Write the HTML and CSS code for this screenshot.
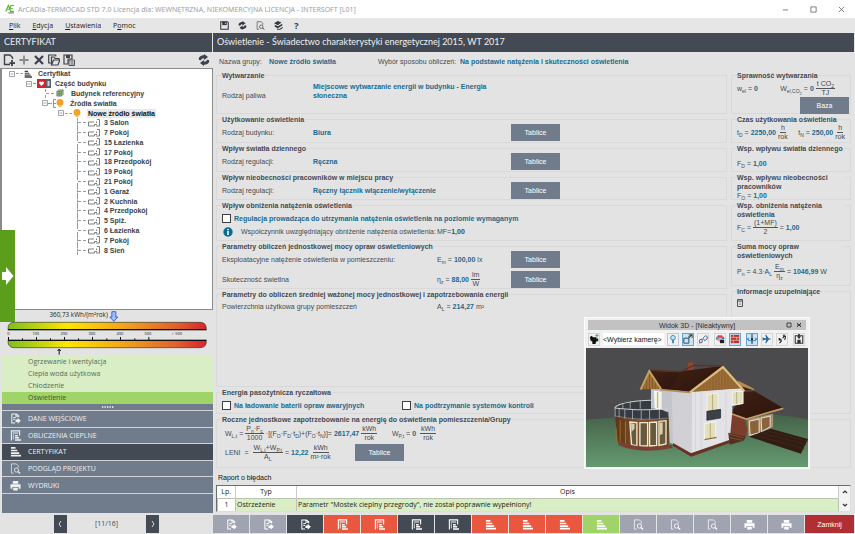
FILE: index.html
```html
<!DOCTYPE html>
<html lang="pl">
<head>
<meta charset="utf-8">
<title>ArCADia-TERMOCAD</title>
<link rel="stylesheet" href="styles.css">
</head>
<body>
<svg class="defs" aria-hidden="true">
  <defs>
    <symbol id="i-docin" viewBox="0 0 12 12"><path d="M9.500 4.500V3L7 1H2v10h3.500M6.500 1v2.500h3" fill="none" stroke="currentColor" stroke-width="1.100"/><path d="M3.500 5h3M3.500 7h2" stroke="currentColor"/><path d="M6 7.200h2.300V5.200l3.500 3.300-3.500 3.300V9.700H6z" fill="currentColor"/></symbol>
    <symbol id="i-calc" viewBox="0 0 12 12"><path d="M1.500 11.500V1h9v5M3 3.300h6M3 5.500h1.300M3 7.500h1.300M3 9.500h1.300" fill="none" stroke="currentColor" stroke-width="1.200"/><path d="M5.500 5.500h3V7h-3zM5.500 7.700h4.500v1.500H5.500zM5.500 10H12v1.700H5.500z" fill="currentColor"/></symbol>
    <symbol id="i-cert" viewBox="0 0 12 12"><path d="M1 1h5v2H1zM1 4h7v1.800H1zM1 6.800h9v1.800H1zM1 9.500h11v2H1z" fill="currentColor"/></symbol>
    <symbol id="i-find" viewBox="0 0 12 12"><path d="M4 11H1.500V1H7l2 2v2" fill="none" stroke="currentColor" stroke-width=".8"/><circle cx="7" cy="7.700" r="2.300" fill="none" stroke="currentColor" stroke-width=".9"/><path d="M8.800 9.300l2.200 2.200" stroke="currentColor" stroke-width="1.300"/></symbol>
    <symbol id="i-print" viewBox="0 0 12 12"><path d="M3 1h6v3H3zM0.500 4.500h11v5H9.500v-2h-7v2h-2zM3.500 8.500h5v3h-5z" fill="currentColor"/></symbol>
    <symbol id="i-add" viewBox="0 0 12 12"><path d="M9.500 5V3.500L7 1H1.500v9.500H7" fill="none" stroke="currentColor" stroke-width="1.400"/><path d="M9 6v6M6.500 9.200h5.500" stroke="currentColor" stroke-width="1.800"/></symbol>
    <symbol id="i-plus" viewBox="0 0 12 12"><path d="M6 1.500v9M1.500 6h9" stroke="currentColor" stroke-width="1.800"/></symbol>
    <symbol id="i-x" viewBox="0 0 12 12"><path d="M2 2l8 8M10 2l-8 8" stroke="currentColor" stroke-width="2.200"/></symbol>
    <symbol id="i-copy" viewBox="0 0 12 12"><path d="M3 9H.700V1h7v1.500M3.500 11V3H6l1 1.500h4V6M3.500 11l2-5h6.300l-1.800 5z" fill="none" stroke="currentColor" stroke-width="1.200"/></symbol>
    <symbol id="i-saveas" viewBox="0 0 12 12"><path d="M1 1h8v4H5v5H1z" fill="none" stroke="currentColor" stroke-width="1.200"/><path d="M3 1h4v3H3z" fill="currentColor"/><path d="M6 6h5.500v5.500H6zM7.500 8h3M7.500 10h3" fill="none" stroke="currentColor" stroke-width=".9"/></symbol>
    <symbol id="i-sync" viewBox="0 0 12 12"><path d="M1 6C0 3 3 1.300 6 1.300V0l4 3-4 3V4.300C4 4.300 3 5 3.300 6.300zM11 6c1 3-2 4.700-5 4.700V12L2 9l4-3v1.700c2 0 3-.7 2.700-2z" fill="currentColor"/></symbol>
    <symbol id="i-disk" viewBox="0 0 12 12"><path d="M1 1h9l1 1v9H1z" fill="none" stroke="currentColor" stroke-width="1.400"/><path d="M3 1h6v4.500H3z" fill="currentColor"/><path d="M6.500 2h1v2h-1z" fill="#e4e4e4"/></symbol>
    <symbol id="i-globe" viewBox="0 0 12 12"><path d="M0 3L5 0l5 2-5 3.500z" fill="currentColor"/><path d="M1 5l4 2 6-3.500V6l-6 3.500L1 7.500zM4 10l3 .5L12 7.500c0 3-5 5-8 4z" fill="currentColor"/></symbol>
    <symbol id="i-room" viewBox="0 0 12 8"><path d="M6 3H.500v4h6V5.500H9M9 .500h2.500v6.500H8M8.500 4V2.500" fill="none" stroke="#6b7075" stroke-width=".9"/></symbol>
    <symbol id="i-minus" viewBox="0 0 6 6"><path d="M.500.500h5v5h-5zM1.500 3h3" fill="none" stroke="#8b8f93" stroke-width=".8"/></symbol>
    <symbol id="i-bulb" viewBox="0 0 9 9"><circle cx="4.500" cy="4" r="3.900" fill="#f5a02a"/><path d="M3 7h3v2H3z" fill="#f7b95c"/></symbol>
  </defs>
</svg>

<div class="app">
  <header class="titlebar">
    <svg class="logo" viewBox="0 0 27 27"><path d="M2 20L9 4l4 9M5 14h7M24 4h-8l-3 9h9M13 13l2 7h9" fill="none" stroke="#58b531" stroke-width="3"/><path d="M9 24h15" stroke="#333" stroke-width="2"/></svg>
    <span class="title">ArCADia-TERMOCAD STD 7.0 Licencja dla: WEWNĘTRZNA, NIEKOMERCYJNA LICENCJA - INTERSOFT [L01]</span>
    <div class="winctl">
      <button aria-label="Minimalizuj"><svg viewBox="0 0 8 8"><path d="M1 4.500h6" stroke="#333" stroke-width=".7"/></svg></button>
      <button aria-label="Maksymalizuj"><svg viewBox="0 0 8 8"><path d="M1 1h6v6H1z" fill="none" stroke="#333" stroke-width=".7"/></svg></button>
      <button aria-label="Zamknij okno"><svg viewBox="0 0 8 8"><path d="M1 1l6 6M7 1L1 7" stroke="#333" stroke-width=".7"/></svg></button>
    </div>
  </header>

  <nav class="menubar">
    <div class="menus"><button><u>P</u>lik</button><button><u>E</u>dycja</button><button><u>U</u>stawienia</button><button>P<u>o</u>moc</button></div>
    <div class="quick">
      <button aria-label="Zapisz"><svg><use href="#i-disk"/></svg></button>
      <button aria-label="Odśwież"><svg><use href="#i-sync"/></svg></button>
      <button aria-label="Podgląd"><svg><use href="#i-find"/></svg></button>
      <button aria-label="Szkolenia"><svg><use href="#i-globe"/></svg></button>
      <button class="help" aria-label="Pomoc">?</button>
    </div>
  </nav>

  <div class="body">
    <aside class="side">
      <h2 class="bar">CERTYFIKAT</h2>
      <div class="tools">
        <button aria-label="Dodaj"><svg><use href="#i-add"/></svg></button>
        <button class="dim" aria-label="Plus"><svg><use href="#i-plus"/></svg></button>
        <button aria-label="Usuń"><svg><use href="#i-x"/></svg></button>
        <button aria-label="Otwórz"><svg><use href="#i-copy"/></svg></button>
        <button aria-label="Zapisz jako"><svg><use href="#i-saveas"/></svg></button>
        <button class="end" aria-label="Synchronizuj"><svg><use href="#i-sync"/></svg></button>
      </div>
      <div class="treebox">
        <ul class="tree">
          <li class="l0"><svg class="exp"><use href="#i-minus"/></svg><i class="dash"></i><svg class="ic"><use href="#i-cert"/></svg><span>Certyfikat</span></li>
          <li class="l1"><svg class="exp"><use href="#i-minus"/></svg><i class="dash short"></i><svg class="wide" viewBox="0 0 14 9"><path d="M0 0h9v9H0z" fill="#d3232e"/><path d="M4.500 7L2 4.200C2 2 4 2 4.500 3.300 5 2 7 2 7 4.200z" fill="#fff"/><path d="M9 0h5v9H9z" fill="#586170"/><path d="M10.500 2h2v5h-2z" fill="#cfd4da"/></svg><span>Część budynku</span></li>
          <li class="l2"><i class="twig last"></i><svg class="ic" viewBox="0 0 9 9"><path d="M1 3l2-2h5v5L6 8H1z" fill="#a9d392" stroke="#4c5a4c" stroke-width=".7"/><path d="M1 3h5v5M6 3l2-2M3.500 3v5M1 5.500h5" fill="none" stroke="#4c5a4c" stroke-width=".7"/></svg><span>Budynek referencyjny</span></li>
          <li class="l3"><svg class="exp"><use href="#i-minus"/></svg><i class="dash"></i><svg class="brk" viewBox="0 0 3 9"><path d="M3 .500H.500v8H3M.500 4.500H3" fill="none" stroke="#777" stroke-width=".8"/></svg><svg class="ic"><use href="#i-bulb"/></svg><span>Źródła światła</span></li>
          <li class="l4"><svg class="exp"><use href="#i-minus"/></svg><i class="dash"></i><svg class="ic"><use href="#i-bulb"/></svg><span class="sel">Nowe źródło światła</span></li>
          <li class="leaf"><i class="twig"></i><svg class="room"><use href="#i-room"/></svg><span>3 Salon</span></li>
          <li class="leaf"><i class="twig"></i><svg class="room"><use href="#i-room"/></svg><span>7 Pokój</span></li>
          <li class="leaf"><i class="twig"></i><svg class="room"><use href="#i-room"/></svg><span>15 Łazienka</span></li>
          <li class="leaf"><i class="twig"></i><svg class="room"><use href="#i-room"/></svg><span>17 Pokój</span></li>
          <li class="leaf"><i class="twig"></i><svg class="room"><use href="#i-room"/></svg><span>18 Przedpokój</span></li>
          <li class="leaf"><i class="twig"></i><svg class="room"><use href="#i-room"/></svg><span>19 Pokój</span></li>
          <li class="leaf"><i class="twig"></i><svg class="room"><use href="#i-room"/></svg><span>21 Pokój</span></li>
          <li class="leaf"><i class="twig"></i><svg class="room"><use href="#i-room"/></svg><span>1 Garaż</span></li>
          <li class="leaf"><i class="twig"></i><svg class="room"><use href="#i-room"/></svg><span>2 Kuchnia</span></li>
          <li class="leaf"><i class="twig"></i><svg class="room"><use href="#i-room"/></svg><span>4 Przedpokój</span></li>
          <li class="leaf"><i class="twig"></i><svg class="room"><use href="#i-room"/></svg><span>5 Spiż.</span></li>
          <li class="leaf"><i class="twig"></i><svg class="room"><use href="#i-room"/></svg><span>6 Łazienka</span></li>
          <li class="leaf"><i class="twig"></i><svg class="room"><use href="#i-room"/></svg><span>7 Pokój</span></li>
          <li class="leaf"><i class="twig"></i><svg class="room"><use href="#i-room"/></svg><span>8 Sień</span></li>
        </ul>
        <button class="drawer" aria-label="Rozwiń panel"><svg viewBox="0 0 13 20"><path d="M1 6h4V1l7.500 9L5 19v-5H1z" fill="#fff"/></svg></button>
      </div>
      <svg class="gauge" viewBox="0 123 636 138">
        <defs><linearGradient id="scale"><stop offset="0" stop-color="#7fbf1f"/><stop offset=".3" stop-color="#ffe600"/><stop offset=".6" stop-color="#f0a01e"/><stop offset=".85" stop-color="#e0602e"/><stop offset="1" stop-color="#d8232f"/></linearGradient></defs>
        <text x="147" y="145" class="gval">360,73 kWh/(m²rok)</text>
        <path d="M334 128h12v16h6l-12 13-12-13h6z" fill="#9fc0ff" stroke="#2c50b8" stroke-width="2.500"/>
        <path d="M23 182V174Q25 160 42 160H598Q615 160 617 174V182z" fill="url(#scale)" stroke="#3a3a20" stroke-width="2"/>
        <path d="M22 182H618" stroke="#111" stroke-width="4"/>
        <g class="ticks"><text x="20" y="197">0</text><text x="95" y="197">100</text><text x="180" y="197">200</text><text x="264" y="197">300</text><text x="348" y="197">400</text><text x="432" y="197">500</text><text x="514" y="197">&gt; 500</text></g>
        <path d="M24 204v9M108 204v9M192 204v9M276 204v9M360 204v9M445 204v9M66 208v5M150 208v5M234 208v5M319 208v5M403 208v5" stroke="#111" stroke-width="3"/>
        <path d="M23 214V222Q25 236 42 236H598Q615 236 617 222V214z" fill="url(#scale)" stroke="#3a3a20" stroke-width="2"/>
        <path d="M22 214H618" stroke="#111" stroke-width="4"/>
        <path d="M176 257V241M171 246l5-6 5 6" fill="none" stroke="#111" stroke-width="3"/>
      </svg>
      <div class="sub"><a href="#">Ogrzewanie i wentylacja</a><a href="#">Ciepła woda użytkowa</a><a href="#">Chłodzenie</a><a href="#" class="on">Oświetlenie</a></div>
      <div class="grip"><svg viewBox="0 0 12 2"><path d="M0 1h12" stroke="#fff" stroke-width="1.300" stroke-dasharray="1.300 1.200"/></svg></div>
      <nav class="main">
        <a href="#"><svg><use href="#i-docin"/></svg>DANE WEJŚCIOWE</a>
        <a href="#"><svg><use href="#i-calc"/></svg>OBLICZENIA CIEPLNE</a>
        <a href="#" class="on"><svg><use href="#i-cert"/></svg>CERTYFIKAT</a>
        <a href="#"><svg><use href="#i-find"/></svg>PODGLĄD PROJEKTU</a>
        <a href="#"><svg><use href="#i-print"/></svg>WYDRUKI</a>
      </nav>
      <div class="filler"></div>
      <div class="pager">
        <button aria-label="Poprzedni"><svg viewBox="0 0 6 8"><path d="M4 1L2 4l2 3" fill="none" stroke="#fff" stroke-width=".8"/></svg></button>
        <span>[11/16]</span>
        <button aria-label="Następny"><svg viewBox="0 0 6 8"><path d="M2 1l2 3-2 3" fill="none" stroke="#fff" stroke-width=".8"/></svg></button>
      </div>
    </aside>

    <main class="content">
      <h1 class="bar">Oświetlenie - Świadectwo charakterystyki energetycznej 2015, WT 2017</h1>
      <div class="form">
        <div class="groupline"><span class="gname">Nazwa grupy:</span><b class="gvalue">Nowe źródło światła</b><span class="gname2">Wybór sposobu obliczeń:</span><b>Na podstawie natężenia i skuteczności oświetlenia</b></div>
        <div class="cols">
          <div class="col wide-col">
            <section class="g h39"><h3>Wytwarzanie</h3><div class="row two"><span class="lab">Rodzaj paliwa</span><b class="fuel">Miejscowe wytwarzanie energii w budynku - Energia słoneczna</b></div></section>
            <section class="g h24"><h3>Użytkowanie oświetlenia</h3><div class="row"><span class="lab">Rodzaj budynku:</span><b class="val">Biura</b><button class="btn">Tablice</button></div></section>
            <section class="g h24"><h3>Wpływ światła dziennego</h3><div class="row"><span class="lab">Rodzaj regulacji:</span><b class="val">Ręczna</b><button class="btn">Tablice</button></div></section>
            <section class="g h23"><h3>Wpływ nieobecności pracowników w miejscu pracy</h3><div class="row"><span class="lab">Rodzaj regulacji:</span><b class="val">Ręczny łącznik włączenie/wyłączenie</b><button class="btn">Tablice</button></div></section>
            <section class="g h36"><h3>Wpływ obniżenia natężenia oświetlenia</h3>
              <label class="check"><input type="checkbox"><b>Regulacja prowadząca do utrzymania natężenia oświetlenia na poziomie wymaganym</b></label>
              <div class="info"><svg viewBox="0 0 10 10"><circle cx="5" cy="5" r="4.700" fill="#0b6a94"/><path d="M4.200 2h1.600v1.300H4.200zM4.200 4h1.600v4H4.200z" fill="#fff"/></svg><span class="wsp">Współczynnik uwzględniający obniżenie natężenia oświetlenia:</span><span>MF=<strong>1,00</strong></span></div>
            </section>
            <section class="g h43"><h3>Parametry obliczeń jednostkowej mocy opraw oświetleniowych</h3>
              <div class="row"><span class="lab long">Eksploatacyjne natężenie oświetlenia w pomieszczeniu:</span><span class="f val"><span>E<sub>m</sub></span>=<b>100,00</b><span>lx</span></span><button class="btn">Tablice</button></div>
              <div class="row gap"><span class="lab long">Skuteczność świetlna</span><span class="f val"><span>η<sub>z</sub></span>=<b>88,00</b><span class="fr"><span>lm</span><span>W</span></span></span><button class="btn">Tablice</button></div>
            </section>
            <section class="g h93"><h3>Parametry do obliczeń średniej ważonej mocy jednostkowej i zapotrzebowania energii</h3>
              <div class="row area"><span class="lab long">Powierzchnia użytkowa grupy pomieszczeń</span><span class="f"><span>A<sub>L</sub></span>=<b>214,27</b><span>m²</span></span></div>
            </section>
            <section class="g h22"><h3>Energia pasożytnicza ryczałtowa</h3>
              <div class="row checks"><label class="check"><input type="checkbox"><b>Na ładowanie baterii opraw awaryjnych</b></label><label class="check"><input type="checkbox"><b>Na podtrzymanie systemów kontroli</b></label></div>
            </section>
          </div>
          <div class="col thin-col">
            <section class="g h39"><h3>Sprawność wytwarzania</h3><div class="row pair gases"><span class="f"><span>w<sub>el</sub></span>=<b>0</b></span><span class="f"><span>W<sub>el,CO<sub>2</sub></sub></span>=<b>0</b><span class="fr"><span>t CO<sub>2</sub></span><span>TJ</span></span></span></div><button class="btn base">Baza</button></section>
            <section class="g h24"><h3>Czas użytkowania oświetlenia</h3><div class="row pair"><span class="f"><span>t<sub>D</sub></span>=<b>2250,00</b><span class="fr"><span>h</span><span>rok</span></span></span><span class="f"><span>t<sub>N</sub></span>=<b>250,00</b><span class="fr"><span>h</span><span>rok</span></span></span></div></section>
            <section class="g h24"><h3>Wsp. wpływu światła dziennego</h3><div class="row low"><span class="f"><span>F<sub>D</sub></span>=<b>1,00</b></span></div></section>
            <section class="g h23"><h3>Wsp. wpływu nieobecności pracowników</h3><div class="row tight"><span class="f"><span>F<sub>O</sub></span>=<b>1,00</b></span></div></section>
            <section class="g h36"><h3>Wsp. obniżenia natężenia oświetlenia</h3><div class="row"><span class="f"><span>F<sub>C</sub></span>=<span class="fr"><span>(1+MF)</span><span>2</span></span>=<b>1,00</b></span></div></section>
            <section class="g h40"><h3>Suma mocy opraw oświetleniowych</h3><div class="row gap"><span class="f"><span>P<sub>n</sub></span>=<span>4.3·A<sub>L</sub></span><span class="fr"><span>E<sub>m</sub></span><span>η<sub>z</sub></span></span>=<b>1046,99</b><span>W</span></span></div></section>
            <section class="g grow"><h3>Informacje uzupełniające</h3><button class="note" aria-label="Informacje"><svg viewBox="0 0 6 8"><path d="M.500.500h5v7h-5zM1 2h4" fill="none" stroke="#40454c" stroke-width=".9"/><path d="M2 4h2M2 5.500h2" stroke="#80858c" stroke-width=".6"/></svg></button></section>
          </div>
        </div>
        <section class="g yearly"><h3>Roczne jednostkowe zapotrzebowanie na energię do oświetlenia pomieszczenia/Grupy</h3>
          <div class="row eq"><span class="f e1"><span>W<sub>L,t</sub></span>=<span class="fr"><span>P<sub>n</sub>·F<sub>c</sub></span><span>1000</span></span><span>·[(F<sub>O</sub>·F<sub>D</sub>·t<sub>D</sub>)+(F<sub>O</sub>·t<sub>N</sub>)]=</span><b>2617,47</b><span class="fr"><span>kWh</span><span>rok</span></span></span><span class="f"><span>W<sub>P,t</sub></span>=<b>0</b><span class="fr sp"><span>kWh</span><span>rok</span></span></span></div>
          <div class="row eq"><span class="f e2"><span>LENI</span>&nbsp;=&nbsp;<span class="fr"><span>W<sub>L,t</sub>+W<sub>P,t</sub></span><span>A<sub>L</sub></span></span>=<b>12,22</b><span class="fr"><span>kWh</span><span>m²·rok</span></span></span><button class="btn">Tablice</button></div>
        </section>

        <div class="view3d">
          <div class="vtitle"><span>Widok 3D - [Nieaktywny]</span><svg viewBox="0 0 18 6"><path d="M1 1h4v4H1zM11 1l4 4M15 1l-4 4M11 3h4" fill="none" stroke="#333" stroke-width=".9"/></svg></div>
          <div class="vtools">
            <button aria-label="Dodaj kamerę"><svg viewBox="0 0 12 12"><path d="M1 4l2-2 2 2h4v2l2-1v4l-2-1v2H8v2H4V9L2 8z" fill="#111"/><path d="M9.500 0v4M7.500 2h4" stroke="#2faa2f"/></svg></button>
            <select aria-label="Kamera"><option>&lt;Wybierz kamerę&gt;</option></select>
            <button class="hl" aria-label="Pinezka"><svg viewBox="0 0 12 12"><circle cx="6" cy="4.500" r="2.800" fill="#c5e6f8" stroke="#2b79aa"/><path d="M6 7v4" stroke="#2b79aa" stroke-width="2"/></svg></button>
            <button class="on" aria-label="Perspektywa"><svg viewBox="0 0 12 12"><path d="M1 5h6v6H1zM6 4l4-3M7 1h4v4M7 5l4-4" fill="none" stroke="#233" stroke-width="1"/></svg></button>
            <button aria-label="Aksonometria"><svg viewBox="0 0 12 12"><path d="M2 7l3-1v4l-3 1zM6 5l3-3 2 1v3L8 8z" fill="#eef" stroke="#246" stroke-width=".9"/></svg></button>
            <button class="m" aria-label="Kolory"><svg viewBox="0 0 12 12"><path d="M1 6a5 4.500 0 0 1 10 0l-4 1-1 3z" fill="#d8a0c8"/><circle cx="2.500" cy="5.500" r="1.500" fill="#3ab54a"/><circle cx="4.500" cy="3" r="1.500" fill="#b3a"/><circle cx="7.500" cy="3" r="1.500" fill="#e33"/><circle cx="9.700" cy="5" r="1.500" fill="#28c"/><path d="M6 7h5v4H6z" fill="#222"/></svg></button>
            <button class="on" aria-label="Tekstury"><svg viewBox="0 0 12 12"><path d="M1 1h10v10H1z" fill="#b5342c"/><path d="M1 4h10M1 7.500h10M4 1v3M8 4v3.500M4 7.500V11" stroke="#ecd0c5" stroke-width=".8"/></svg></button>
            <button class="on m" aria-label="Orbita"><svg viewBox="0 0 12 12"><path d="M6 0v12" stroke="#12304a" stroke-width="1.200"/><path d="M.500 6c2 3 9 3 11 0M2 4.500L.500 6l2 1.500M10 4.500L11.500 6l-2 1.500" fill="none" stroke="#235a85"/><circle cx="6" cy="6" r="1.300" fill="#102030"/></svg></button>
            <button class="sky" aria-label="Lot"><svg viewBox="0 0 12 12"><path d="M11.500 6L8 6.900 5 11H4l1-4-3 .2L1 8.500 .500 6 1 3.500l1 1.300L5 5 4 1h1l3 4.100z" fill="#246da8"/></svg></button>
            <button aria-label="Spacer"><svg viewBox="0 0 12 12"><path d="M2 7h3v2l-2 2M7 5l1-2h2v2l-1 2M7 1.500h3M2 5.500h2" fill="none" stroke="#222" stroke-width="1.300"/></svg></button>
            <button class="m" aria-label="Zapisz widok"><svg viewBox="0 0 12 12"><path d="M1.500 2h9v9h-9z" fill="none" stroke="#333" stroke-width="1.300"/><path d="M4 7h4v4H4zM5 0h2v3h1.500L6 6 3.500 3H5z" fill="#333"/></svg></button>
          </div>
          <svg class="scene" viewBox="18 108 663 357" preserveAspectRatio="none">
            <defs>
              <linearGradient id="gr" x1="0" y1="0" x2="0" y2="1"><stop offset="0" stop-color="#456149"/><stop offset="1" stop-color="#659a70"/></linearGradient>
              <linearGradient id="wd" x1="0" x2="1"><stop offset="0" stop-color="#5c3418"/><stop offset=".5" stop-color="#8a5528"/><stop offset="1" stop-color="#6a3e1c"/></linearGradient>
              <pattern id="planks" width="9" height="8" patternUnits="userSpaceOnUse"><path d="M0 0h9v8H0z" fill="#9c6e38"/><path d="M0 0v8" stroke="#7d5324" stroke-width="4"/></pattern>
              <linearGradient id="tiles" x1="0" y1="0" x2="1" y2="1"><stop offset="0" stop-color="#412013"/><stop offset="1" stop-color="#2b140d"/></linearGradient>
            </defs>
            <path d="M18 108h663v357H18z" fill="#4b4b4d"/>
            <path d="M18 323Q110 315 210 308L560 305Q630 312 681 322V465H18z" fill="url(#gr)"/>
            <path d="M322 152l16-3 3 40h-19z" fill="#8e4634"/>
            <path d="M450 208L519 228 522 234 470 236z" fill="#41200f"/>
            <path d="M470 205l52 26-4 4-40-14z" fill="#b98a52"/>
            <path d="M453 300L490 318 500 352 496 374 447 386z" fill="#7d3d2d"/>
            <path d="M500 322L577 305V345L503 373z" fill="#a98f6b"/>
            <path d="M506 328L535 321V362L508 370zM541 319L568 312V345L543 358z" fill="#8a6438" stroke="#ddd" stroke-width="3"/>
            <path d="M487 240L522 238 607 288 497 320 452 304z" fill="url(#tiles)"/>
            <path d="M452 305L497 321 607 289" fill="none" stroke="#c39a65" stroke-width="5"/>
            <path d="M505 374L570 350 681 381 660 425z" fill="#321d14"/>
            <path d="M520 369L670 410M540 362L676 398M556 356L680 388" stroke="#452a1f" stroke-width="2"/>
            <path d="M212 222L332 240V422L268 392 264 300 212 292z" fill="#c4c5cb"/>
            <path d="M274 240L332 243V425L278 394z" fill="#d0d0d5"/>
            <path d="M332 238L487 228V276L455 282V300L447 384 332 424z" fill="#e2e2e7"/>
            <path d="M345 240V415M362 240V411M436 240V388" stroke="#d6d6db" stroke-width="3"/>
            <path d="M278 393L332 424 447 384V393L332 434 278 402z" fill="#6a3125"/>
            <path d="M443 362l52 12-6 12-42 12z" fill="#54301f"/><path d="M443 366l45 11M443 376l43 9" stroke="#8b5b40" stroke-width="2"/>
            <path d="M207 178L240 232 181 232z" fill="url(#planks)"/>
            <path d="M206 176L302 181 275 236 242 232z" fill="url(#tiles)"/>
            <path d="M302 178L425 162 330 240 268 233z" fill="url(#tiles)"/>
            <path d="M208 174L302 179 340 160 428 162" fill="none" stroke="#593424" stroke-width="4"/>
            <path d="M427 169L488 228 334 240z" fill="url(#planks)"/>
            <path d="M328 241L427 165 491 238" fill="none" stroke="#ddbc7d" stroke-width="7"/>
            <path d="M181 233L207 177 244 234" fill="none" stroke="#c5a261" stroke-width="6"/>
            <path d="M240 233L328 241" stroke="#b28e5d" stroke-width="5"/>
            <path d="M223 238L242 241V290L225 288z" fill="#f2efd9" stroke="#fff" stroke-width="3"/><path d="M232 240v48" stroke="#8e8b7c" stroke-width="2"/>
            <path d="M380 248L412 244V297L380 300zM372 335L405 329V377L372 384zM455 240L487 238V274L455 278z" fill="#e3dfb9" stroke="#f3f2ea" stroke-width="3"/>
            <path d="M396 247V298M389 333V380M468 240V276" stroke="#b3ad8b" stroke-width="3"/>
            <path d="M379 298L420 292V318L379 325z" fill="#3c4145" stroke="#202224" stroke-width="2"/><path d="M372 383l36-7" stroke="#9d6b36" stroke-width="4"/>
            <path d="M105 315Q180 300 265 316V403Q180 420 113 388z" fill="url(#wd)"/>
            <path d="M149 330L170 332V402L154 398zM179 332L202 332V402L179 402zM208 331L229 330V400L208 402zM236 328L257 326V396L236 400z" fill="#67593c" stroke="#efe9d8" stroke-width="4"/>
            <path d="M152 334L163 335V350L154 360zM238 332L247 331V365L238 370z" fill="#d9cda4"/>
            <path d="M108 350v38M120 325v67M136 328v70" stroke="#a56c33" stroke-width="3"/>
            <path d="M112 387Q190 416 276 398V408Q180 428 116 400z" fill="#7a4131"/>
            <path d="M104 286Q120 268 212 265V290Q265 288 264 318Q180 328 106 312z" fill="#363b42"/>
            <path d="M104 287Q120 268 214 265M104 288Q170 297 265 291" fill="none" stroke="#c9ccd0" stroke-width="3"/>
            <path d="M265 318Q180 328 106 312" fill="none" stroke="#8d9196" stroke-width="2"/>
            <path d="M105 286v28M117 290v26M134 292v28M157 294v28M183 295v28M208 294v28M237 293v27M128 274v17M150 270v20M180 267v23" stroke="#c9ccd0" stroke-width="2"/>
          </svg>
        </div>
      </div>

      <section class="report">
        <h4>Raport o błędach</h4>
        <div class="rbox">
          <table>
            <thead><tr><th class="c1">Lp.</th><th class="c2">Typ</th><th>Opis</th></tr></thead>
            <tbody><tr><td class="n">1</td><td>Ostrzeżenie</td><td>Parametr "Mostek cieplny przegrody", nie został poprawnie wypełniony!</td></tr></tbody>
          </table>
          <div class="scroll"><svg viewBox="0 0 6 4"><path d="M1 3l2-2 2 2" fill="none" stroke="#333" stroke-width="1.200"/></svg><svg viewBox="0 0 6 4"><path d="M1 1l2 2 2-2" fill="none" stroke="#333" stroke-width="1.200"/></svg></div>
        </div>
      </section>

      <footer class="steps">
        <button class="gy" aria-label="Krok 1"><svg><use href="#i-docin"/></svg></button>
        <button class="gy" aria-label="Krok 2"><svg><use href="#i-docin"/></svg></button>
        <button class="dk" aria-label="Krok 3"><svg><use href="#i-docin"/></svg></button>
        <button class="rd" aria-label="Krok 4"><svg><use href="#i-calc"/></svg></button>
        <button class="rd" aria-label="Krok 5"><svg><use href="#i-calc"/></svg></button>
        <button class="dk" aria-label="Krok 6"><svg><use href="#i-calc"/></svg></button>
        <button class="dk" aria-label="Krok 7"><svg><use href="#i-calc"/></svg></button>
        <button class="rd" aria-label="Krok 8"><svg><use href="#i-cert"/></svg></button>
        <button class="rd" aria-label="Krok 9"><svg><use href="#i-cert"/></svg></button>
        <button class="rd" aria-label="Krok 10"><svg><use href="#i-cert"/></svg></button>
        <button class="gn" aria-label="Krok 11"><svg><use href="#i-cert"/></svg></button>
        <button class="gy" aria-label="Krok 12"><svg><use href="#i-find"/></svg></button>
        <button class="gy" aria-label="Krok 13"><svg><use href="#i-find"/></svg></button>
        <button class="gy" aria-label="Krok 14"><svg><use href="#i-find"/></svg></button>
        <button class="gy" aria-label="Krok 15"><svg><use href="#i-print"/></svg></button>
        <button class="gy" aria-label="Krok 16"><svg><use href="#i-print"/></svg></button>
        <button class="close">Zamknij</button>
      </footer>
    </main>
  </div>
</div>
</body>
</html>
```
FILE: styles.css
```css
* { box-sizing: border-box; }
body { margin: 0; background: #e3e3e3; color: #444a52; font: 7px/9px "Liberation Sans", sans-serif; }
button { border: 0; padding: 0; margin: 0; background: none; color: inherit; font: inherit; display: flex; align-items: center; justify-content: center; }
a { color: inherit; text-decoration: none; }
h1, h2, h3, h4, ul { margin: 0; padding: 0; }
ul { list-style: none; }
svg { display: block; flex: none; }
.defs { position: absolute; width: 0; height: 0; }

.app { min-height: 100vh; display: flex; flex-direction: column; }
.titlebar { height: 18px; background: #fff; display: flex; align-items: center; padding-left: 5px; color: #a0a0a0; font: 7px/9px "Noto Sans", sans-serif; }
.logo { width: 10px; height: 10px; margin-right: 3px; }
.winctl { margin-left: auto; display: flex; }
.winctl button { width: 28px; height: 18px; }
.winctl svg { width: 7px; height: 7px; }

.menubar { height: 15px; display: flex; background: #e6e6e6; color: #222; font: 7px/9px "Open Sans", sans-serif; }
.menus { width: 220px; display: flex; align-items: center; gap: 12px; padding-left: 9px; }
.quick { display: flex; align-items: center; gap: 9px; color: #333840; }
.quick svg, .quick button { width: 9px; height: 9px; }
.quick .help { font: bold 9px/9px "Open Sans", sans-serif; }

.body { flex: 1; display: flex; }
.side { width: 213px; flex: none; display: flex; flex-direction: column; }
.content { flex: 1; min-width: 0; display: flex; flex-direction: column; }
.bar { height: 19px; background: #434a54; color: #eef0f2; font: 9px/18px Lato, "Open Sans", sans-serif; padding-left: 4px; border-right: 1px solid #e3e3e3; }

.tools { height: 16px; display: flex; align-items: center; gap: 3px; padding: 0 3px; color: #3b424b; }
.tools button, .tools svg { width: 12px; height: 12px; }
.tools .dim { color: #85898e; }
.tools .end { margin-left: auto; }
.treebox { position: relative; height: 242px; background: #fff; border: 1px solid #8a8a8a; border-width: 1px 1px 1px 2px; }
.tree { height: 186px; display: grid; grid-auto-rows: 1fr; color: #3a3f46; font-weight: bold; }
.tree li { display: flex; align-items: center; }
.exp { width: 6px; height: 6px; }
.dash { width: 7px; border-top: 1px dashed #999; margin: 0 1px; }
.dash.short { width: 3px; }
.ic { width: 8px; height: 8px; margin-right: 6px; }
.wide { width: 14px; height: 9px; margin-right: 4px; }
.brk { width: 3px; height: 9px; }
.room { width: 12px; height: 8px; margin-right: 4px; }
.twig { width: 11px; align-self: stretch; border-left: 1px dashed #999; display: flex; align-items: center; }
.twig::after { content: ""; width: 8px; border-top: 1px dashed #999; }
.l0 { padding-left: 7px; }
.l1 { padding-left: 24px; }
.l2 { padding-left: 43px; }
.l2 .ic { margin-right: 7px; }
.l3 { padding-left: 40px; }
.l4 { padding-left: 56px; }
.l3 .dash { width: 4px; margin: 0 1px 0 0; }
.leaf { padding-left: 75px; }
.sel { background: #e9e9e9; color: #111; padding: 0 1px; }
.drawer { position: absolute; left: -2px; top: 161px; width: 15px; height: 92px; background: #5a9e1c; z-index: 2; }
.drawer svg { width: 13px; height: 20px; }

.gauge { width: 100%; height: 46px; }
.gval { font: 19px "Open Sans", sans-serif; fill: #222; }
.ticks { font: 12px "Open Sans", sans-serif; fill: #111; }
.sub { margin-left: 2px; display: grid; gap: 1px; color: #5c6b55; font: 7px/11px "Open Sans", sans-serif; }
.sub a { background: #d9eec5; padding-left: 26px; }
.sub .on { background: #a0d468; color: #3f5530; height: 12px; }
.grip { margin-left: 2px; height: 6px; background: #707c8c; display: flex; align-items: center; justify-content: center; }
.grip svg { width: 12px; height: 2px; }
.main { margin-left: 2px; height: 83px; display: flex; flex-direction: column; color: #eef0f2; font: 7px/9px "Open Sans", sans-serif; }
.main a { flex: 1; display: flex; align-items: center; gap: 7px; padding-left: 8px; background: #707c8c; border-top: 1px solid #d0d3d6; }
.main svg { width: 11px; height: 11px; }
.main .on { background: #434a54; }
.filler { margin-left: 2px; flex: 1; background: #707c8c; border-top: 1px solid #d0d3d6; }
.pager { height: 21px; display: flex; align-items: center; justify-content: center; gap: 28px; font: 7px/9px "Open Sans", sans-serif; }
.pager button { width: 13px; height: 18px; background: #434a54; }
.pager svg { width: 6px; height: 8px; }

.form { position: relative; padding: 3px 4px 0 3px; }
.groupline { display: flex; align-items: center; height: 12px; padding-left: 3px; }
.gname { width: 50px; }
.gvalue { width: 109px; }
.gname2 { width: 82px; }
b { color: #1b6a8e; font-weight: bold; }
.cols { display: flex; gap: 4px; padding-top: 8px; }
.col { display: flex; flex-direction: column; gap: 5px; }
.wide-col { flex: 1; }
.thin-col { width: 120px; }
.g { border: 1px solid #d9d9d9; padding: 0 5px; min-width: 0; }
.h39 { height: 39px; } .h24 { height: 24px; } .h23 { height: 23px; } .h36 { height: 36px; }
.h43 { height: 43px; } .h93 { height: 93px; } .h22 { height: 22px; } .h40 { height: 40px; }
.grow { flex: 1; }
.g h3 { font: bold 7px/9px "Liberation Sans", sans-serif; margin-top: -5px; width: fit-content; background: #e3e3e3; }
.row { display: flex; align-items: center; height: 17px; }
.row.gap { margin-top: 3px; }
.row.two { height: 20px; align-items: flex-end; }
.lab { width: 91px; flex: none; }
.lab.long { width: 215px; }
.val { width: 198px; }
.long + .val { width: 74px; }
.fuel { width: 200px; }
.btn { width: 49px; height: 17px; background: #707c8c; color: #fff; flex: none; }
.row.area { height: 15px; }
.check { display: flex; align-items: center; gap: 3px; height: 13px; }
h3 + .check { margin-top: 2px; }
.check input { appearance: none; width: 9px; height: 9px; margin: 0; background: #fff; border: 1px solid #3c4046; flex: none; }
.checks .check { width: 180px; }
.info { display: flex; align-items: center; height: 13px; padding-left: 1px; }
.info svg { width: 10px; height: 10px; margin-right: 8px; }
.wsp { width: 196px; }
.f { display: inline-flex; align-items: center; gap: 2px; white-space: nowrap; }
sub { font-size: 5px; line-height: 0; vertical-align: -2px; }
sub sub { font-size: 4px; }
.fr { display: inline-flex; flex-direction: column; align-items: center; line-height: 8px; }
.fr > span:first-child { border-bottom: 1px solid #555; padding: 0 1px; }
.pair { justify-content: space-between; }
.gases { padding-right: 10px; }
.base { margin-left: auto; margin-right: -4px; }
.low { height: 17px; padding-top: 3px; }
.tight { height: 9px; }
.note { margin-top: 3px; }
.note svg { width: 6px; height: 8px; }
.yearly { height: 49px; margin-top: 5px; }
.row.eq { padding-left: 3px; height: 19px; }
.e1 { width: 167px; }
.e2 { width: 130px; }
.fr.sp { margin-left: 2px; }

.view3d { position: absolute; left: 371px; top: 265px; width: 226px; background: #f1f1f1; border: 1px solid #fafafa; padding: 2px 1px 1px; }
.vtitle { height: 10px; margin: 0 2px; background: #c2c2c2; display: flex; align-items: center; justify-content: center; position: relative; color: #333; }
.vtitle svg { position: absolute; right: 2px; top: 2px; width: 18px; height: 6px; }
.vtools { height: 18px; display: flex; align-items: center; gap: 3px; padding: 0 3px 0 2px; }
.vtools button { width: 12px; height: 13px; flex: none; border: 1px solid #d5d5d5; }
.vtools svg { width: 10px; height: 10px; }
.vtools .on { background: #c8e5f7; border-color: #5fa6d2; }
.vtools .hl { border-color: #b6cbd6; }
.vtools .m { margin-left: 2px; }
.vtools select { appearance: none; flex: 1; min-width: 0; height: 12px; border: 0; padding: 0; background: #fff; color: #111; font: 7px/11px "Liberation Sans", sans-serif; }
.scene { width: 100%; height: 119px; }

.report { padding: 0 4px 0 3px; margin-top: 5px; }
.report h4 { font: 7px/10px "Liberation Sans", sans-serif; color: #111; padding-left: 2px; }
.rbox { display: flex; margin-top: 2px; height: 27px; background: #fff; border: 1px solid #6d6d6d; border-right-color: #ddd; border-bottom-color: #ddd; overflow: hidden; }
table { flex: 1; border-collapse: collapse; font: 7px/9px "Open Sans", sans-serif; color: #222; }
th { font-weight: normal; height: 12px; padding: 0; border-right: 1px solid #ccc; }
.c1 { width: 18px; } .c2 { width: 61px; }
td { height: 13px; padding: 0 1px; background: #d9eec5; border: 1px solid #b9c4b0; }
td.n { background: #fff; text-align: center; }
.scroll { width: 11px; background: #f3f3f3; display: flex; flex-direction: column; align-items: center; justify-content: space-between; padding: 4px 0; }
.scroll svg { width: 6px; height: 4px; }

.steps { height: 20px; margin-top: auto; padding: 1px 1px 1px 0; display: flex; gap: 1px; color: #fff; }
.steps button { flex: 1; }
.steps svg { width: 11px; height: 11px; }
.gy { background: #a0a4b0; } .dk { background: #434a54; } .rd { background: #e9573f; } .gn { background: #a0d468; }
.steps .close { flex: none; width: 49px; background: #b12f33; }
```
